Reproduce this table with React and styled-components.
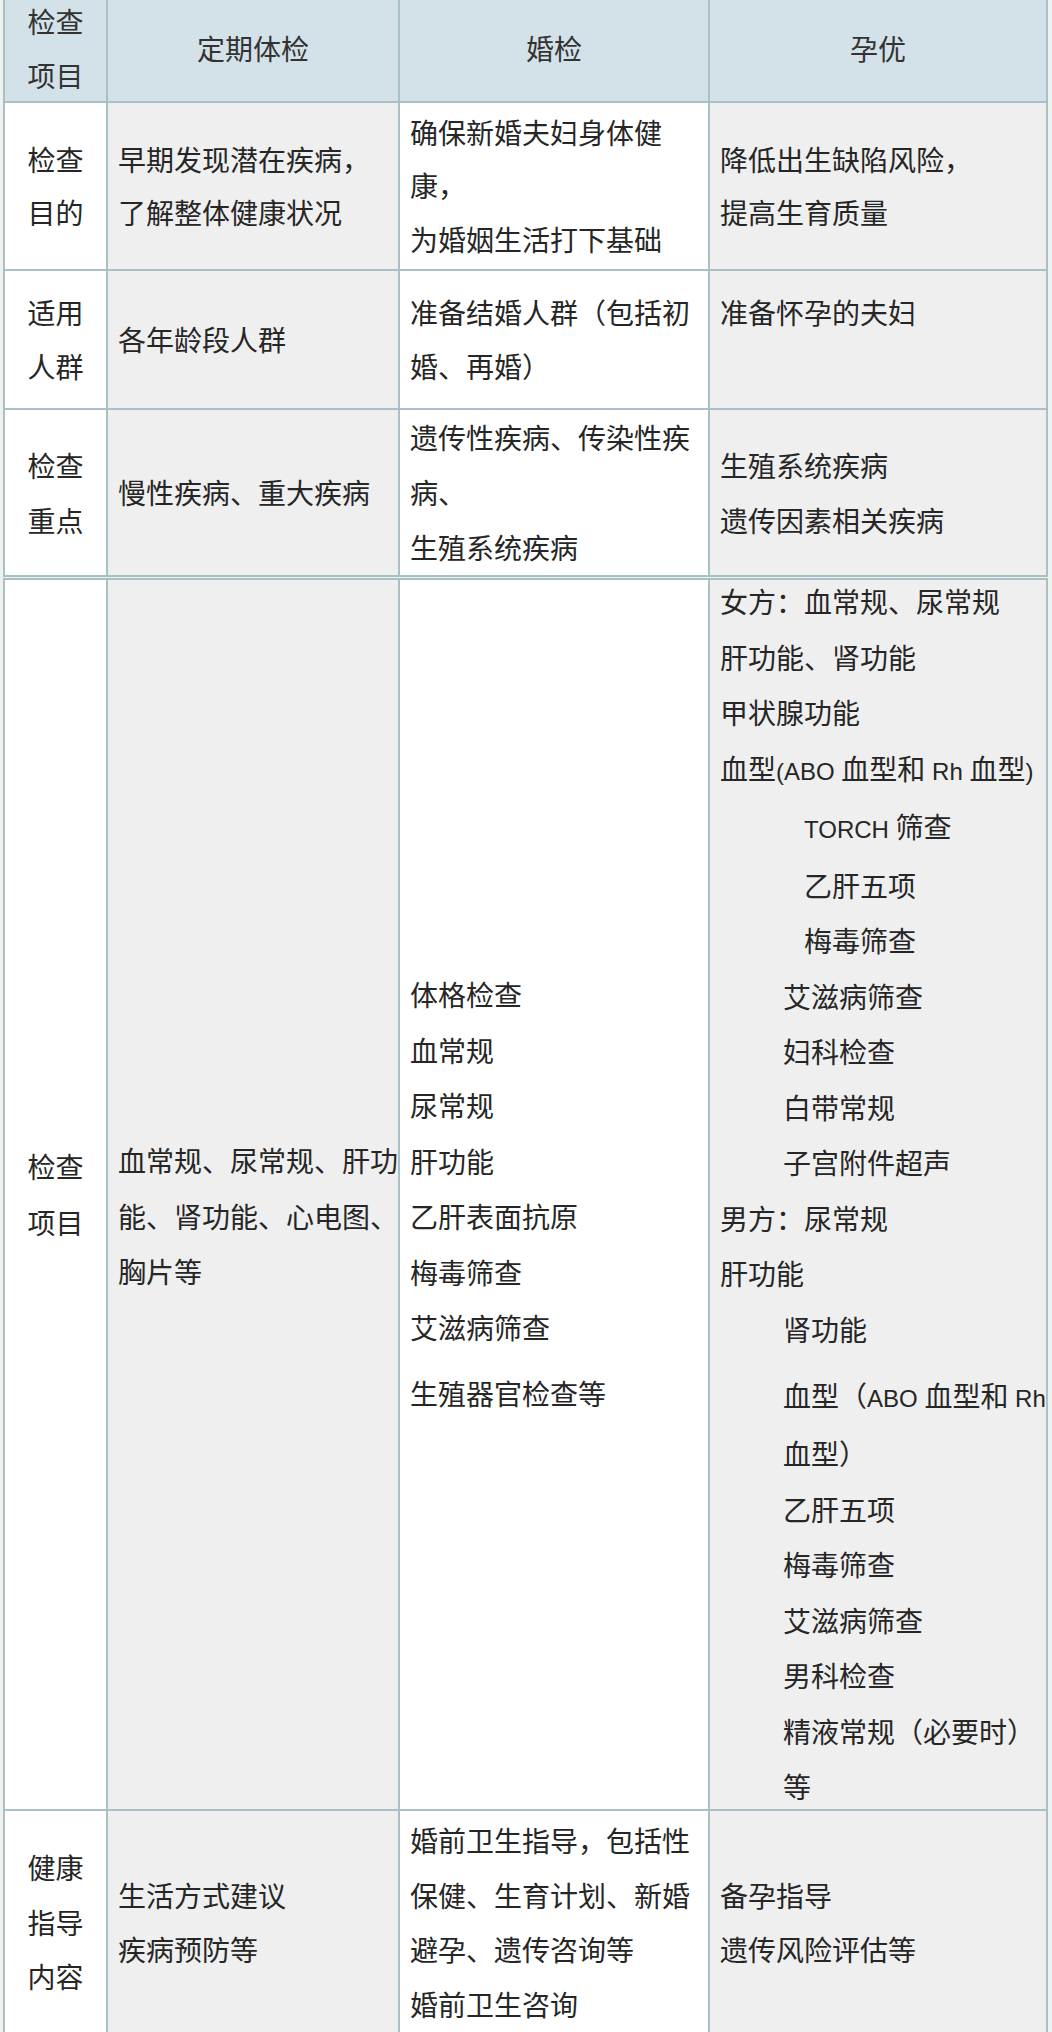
import styled, { createGlobalStyle } from "styled-components";

const GlobalStyle = createGlobalStyle`
  html, body {
    margin: 0;
    padding: 0;
  }
  body {
    background: #edf2ec;
    font-family: "Noto Sans CJK SC", sans-serif;
    color: #262626;
  }
`;

const BORDER = "#a8c0c6";

const Page = styled.div`
  width: 1052px;
  height: 2032px;
  overflow: hidden;
  box-sizing: border-box;
  padding-left: 3px;
`;

const Table = styled.div`
  width: 1045px;
  box-sizing: border-box;
  border-left: 2px solid ${BORDER};
  border-top: 2px solid ${BORDER};
  margin-top: ${(p) => p.$mt || 0}px;
  font-size: 28px;
`;

const Row = styled.div`
  display: grid;
  grid-template-columns: 103px 292px 310px 338px;
  height: ${(p) => p.$h}px;
  box-sizing: border-box;
  border-bottom: 2px solid ${BORDER};
  line-height: ${(p) => p.$lh}px;
`;

const bgs = {
  head: "#d3e1e8",
  white: "#ffffff",
  gray: "#efefef",
};

const Cell = styled.div`
  display: flex;
  flex-direction: column;
  justify-content: center;
  align-items: ${(p) => (p.$center ? "center" : "flex-start")};
  box-sizing: border-box;
  padding: ${(p) => p.$pt || 0}px 0 0 10px;
  padding-left: ${(p) => (p.$center ? 0 : 10)}px;
  background: ${(p) => bgs[p.$bg || "white"]};
  border-right: 2px solid ${BORDER};
  overflow: hidden;
  color: ${(p) => (p.$bg === "head" ? "#333" : "#262626")};
`;

const Line = styled.div`
  white-space: nowrap;
  margin-left: ${(p) => p.$indent || 0}px;
  margin-top: ${(p) => p.$gap || 0}px;
`;

const Blank = styled.div`
  height: ${(p) => p.$h}px;
`;

const Lat = styled.span`
  font-family: "Liberation Sans", sans-serif;
  font-size: 24px;
`;

const Lines = ({ items }) =>
  items.map((t, i) => <Line key={i}>{t}</Line>);

const female = [
  { t: "女方：血常规、尿常规" },
  { t: "肝功能、肾功能" },
  { t: "甲状腺功能" },
  {
    t: (
      <>
        血型<Lat>(ABO </Lat>血型和<Lat> Rh </Lat>血型<Lat>)</Lat>
      </>
    ),
  },
  { t: <><Lat>TORCH </Lat>筛查</>, i: 84 },
  { t: "乙肝五项", i: 84 },
  { t: "梅毒筛查", i: 84 },
  { t: "艾滋病筛查", i: 63 },
  { t: "妇科检查", i: 63 },
  { t: "白带常规", i: 63 },
  { t: "子宫附件超声", i: 63 },
  { t: "男方：尿常规" },
  { t: "肝功能" },
  { t: "肾功能", i: 63 },
  {
    t: (
      <>
        血型（<Lat>ABO </Lat>血型和<Lat> Rh</Lat>
      </>
    ),
    i: 63,
    g: 10.5,
  },
  { t: "血型）", i: 63 },
  { t: "乙肝五项", i: 63 },
  { t: "梅毒筛查", i: 63 },
  { t: "艾滋病筛查", i: 63 },
  { t: "男科检查", i: 63 },
  { t: "精液常规（必要时）", i: 63 },
  { t: "等", i: 63 },
];

const App = () => {
  return (
    <Page>
      <GlobalStyle />
      <Table $mt={-7}>
        <Row $h={108} $lh={54}>
          <Cell $bg="head" $center>
            <Lines items={["检查", "项目"]} />
          </Cell>
          <Cell $bg="head" $center>定期体检</Cell>
          <Cell $bg="head" $center>婚检</Cell>
          <Cell $bg="head" $center>孕优</Cell>
        </Row>
        <Row $h={168} $lh={53.5}>
          <Cell $center>
            <Lines items={["检查", "目的"]} />
          </Cell>
          <Cell $bg="gray">
            <Lines items={["早期发现潜在疾病，", "了解整体健康状况"]} />
          </Cell>
          <Cell>
            <Lines items={["确保新婚夫妇身体健", "康，", "为婚姻生活打下基础"]} />
          </Cell>
          <Cell $bg="gray">
            <Lines items={["降低出生缺陷风险，", "提高生育质量"]} />
          </Cell>
        </Row>
        <Row $h={139} $lh={53.5}>
          <Cell $center>
            <Lines items={["适用", "人群"]} />
          </Cell>
          <Cell $bg="gray">各年龄段人群</Cell>
          <Cell>
            <Lines items={["准备结婚人群（包括初", "婚、再婚）"]} />
          </Cell>
          <Cell $bg="gray">
            <Line>准备怀孕的夫妇</Line>
            <Blank $h={53.5} />
          </Cell>
        </Row>
        <Row $h={167} $lh={55}>
          <Cell $center>
            <Lines items={["检查", "重点"]} />
          </Cell>
          <Cell $bg="gray">慢性疾病、重大疾病</Cell>
          <Cell>
            <Lines items={["遗传性疾病、传染性疾", "病、", "生殖系统疾病"]} />
          </Cell>
          <Cell $bg="gray">
            <Lines items={["生殖系统疾病", "遗传因素相关疾病"]} />
          </Cell>
        </Row>
      </Table>

      <Table $mt={1}>
        <Row $h={1231} $lh={55.5}>
          <Cell $center>
            <Lines items={["检查", "项目"]} />
          </Cell>
          <Cell $bg="gray" $pt={44}>
            <Lines items={["血常规、尿常规、肝功", "能、肾功能、心电图、", "胸片等"]} />
          </Cell>
          <Cell>
            <Lines
              items={[
                "体格检查",
                "血常规",
                "尿常规",
                "肝功能",
                "乙肝表面抗原",
                "梅毒筛查",
                "艾滋病筛查",
              ]}
            />
            <Line $gap={10.5}>生殖器官检查等</Line>
          </Cell>
          <Cell $bg="gray">
            {female.map((l, k) => (
              <Line key={k} $indent={l.i} $gap={l.g}>
                {l.t}
              </Line>
            ))}
          </Cell>
        </Row>
        <Row $h={224} $lh={54.5}>
          <Cell $center>
            <Lines items={["健康", "指导", "内容"]} />
          </Cell>
          <Cell $bg="gray">
            <Lines items={["生活方式建议", "疾病预防等"]} />
          </Cell>
          <Cell>
            <Lines
              items={[
                "婚前卫生指导，包括性",
                "保健、生育计划、新婚",
                "避孕、遗传咨询等",
                "婚前卫生咨询",
              ]}
            />
          </Cell>
          <Cell $bg="gray">
            <Lines items={["备孕指导", "遗传风险评估等"]} />
          </Cell>
        </Row>
      </Table>
    </Page>
  );
};

export default App;
